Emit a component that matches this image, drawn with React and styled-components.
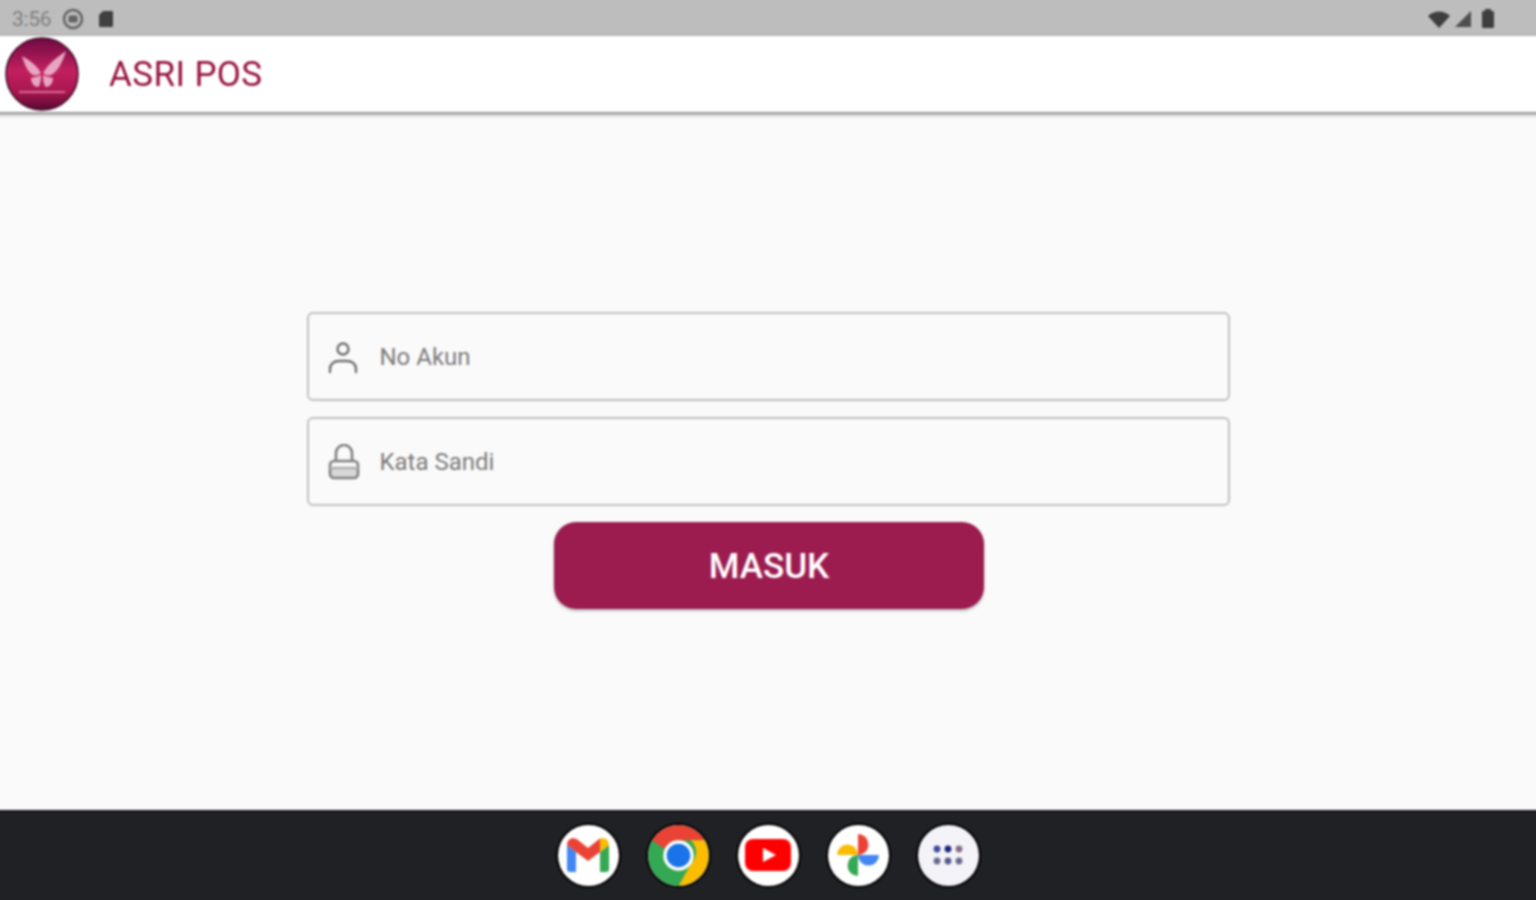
import React from "react";
import styled, { createGlobalStyle } from "styled-components";

const GlobalStyle = createGlobalStyle`
  html, body {
    margin: 0;
    padding: 0;
    background: #fafafa;
    overflow: hidden;
  }
  body {
    font-family: Roboto, "Liberation Sans", sans-serif;
  }
`;

// the reference is an upscaled capture, so everything is a little soft.
// 4px of bleed on each side keeps the blur from fading at the window edge
const Screen = styled.div`
  width: 1544px;
  height: 908px;
  margin: -4px;
  display: flex;
  flex-direction: column;
  overflow: hidden;
  filter: blur(0.9px);
`;

const StatusBar = styled.div`
  height: 40px;
  flex: none;
  background: #bdbdbd;
  display: flex;
  align-items: center;
  justify-content: space-between;
  padding: 5px 45px 0 16px;
  box-sizing: border-box;
`;

const StatusGroup = styled.div`
  display: flex;
  align-items: center;
  gap: ${(p) => p.$gap || 0}px;
`;

const Clock = styled.span`
  font-size: 21px;
  color: #808080;
  letter-spacing: -0.3px;
  margin-right: -2px;
`;

const AppBar = styled.header`
  height: 76px;
  flex: none;
  background: #fff;
  display: flex;
  align-items: center;
  padding-left: 9px;
  box-shadow: 0 2px 4px rgba(0, 0, 0, 0.55);
  position: relative;
  z-index: 1;
`;

const Title = styled.h1`
  margin: 0 0 0 30px;
  font-size: 35px;
  font-weight: 400;
  letter-spacing: 0.4px;
  color: #96123f;
`;

const Main = styled.main`
  flex: 1;
  background: #fafafa;
  display: flex;
  flex-direction: column;
  align-items: center;
  justify-content: center;
  gap: 16px;
  padding-bottom: 2px;
`;

const Field = styled.div`
  width: 923px;
  height: 89px;
  box-sizing: border-box;
  border: 2px solid #bfbfbf;
  border-radius: 6px;
  display: flex;
  align-items: center;
  padding: 2px 0 0 18px;
  gap: 19px;
`;

const Placeholder = styled.span`
  font-size: 24px;
  color: #7a7a7a;
`;

const LoginButton = styled.button`
  width: 430px;
  height: 87px;
  margin-left: 2px;
  padding: 3px 0 0;
  border: none;
  border-radius: 22px;
  background: #9c1c50;
  color: #fff;
  font-family: Roboto, "Liberation Sans", sans-serif;
  font-size: 35px;
  font-weight: 500;
  box-shadow: 0 2px 3px rgba(0, 0, 0, 0.25);
`;

const NavBar = styled.nav`
  height: 94px;
  flex: none;
  background: #202125;
  border-top: 2px solid #111;
  box-sizing: border-box;
  display: flex;
  align-items: center;
  justify-content: center;
  gap: 29px;
  padding-bottom: 6px;
`;

const DockIcon = styled.div`
  width: 61px;
  height: 61px;
  border-radius: 50%;
  background: ${(p) => p.$bg || "#fff"};
  box-shadow: 0 0 0 2px #000;
  display: flex;
  align-items: center;
  justify-content: center;
  overflow: hidden;
`;

const Logo = () => (
  <svg width="74" height="74" viewBox="0 0 74 74">
    <defs>
      <linearGradient id="logoFill" x1="0" y1="0" x2="0" y2="1">
        <stop offset="0" stopColor="#6e0a42" />
        <stop offset="0.45" stopColor="#c2205f" />
        <stop offset="0.75" stopColor="#a8174f" />
        <stop offset="1" stopColor="#560832" />
      </linearGradient>
    </defs>
    <circle cx="37" cy="37" r="36" fill="url(#logoFill)" stroke="#3f0826" strokeWidth="1.500" />
    <g fill="#eeb4cd" opacity="0.9">
      <path d="M36 36 C32 29 26 24 17 19 C20 29 23 35 28 38 C31 39 34 38 36 36Z" />
      <path d="M38 36 C42 29 48 23 61 14 C57 27 52 35 46 38 C43 39 40 38 38 36Z" />
      <path d="M36 38 C32 40 28 40 26 41 C26 46 29 50 33 50 C35 49 36 44 36 38Z" />
      <path d="M38 38 C42 40 46 40 48 41 C48 46 45 50 41 50 C39 49 38 44 38 38Z" />
    </g>
    <rect x="14" y="54" width="46" height="2" fill="#e889ae" opacity="0.75" />
  </svg>
);

const SyncIcon = () => (
  <svg width="22" height="22" viewBox="0 0 22 22">
    <circle cx="11" cy="11" r="9" fill="none" stroke="#626262" strokeWidth="2.500" />
    <rect x="6.500" y="7.500" width="9" height="7" rx="1.500" fill="#626262" />
  </svg>
);

const SimIcon = () => (
  <svg width="18" height="18" viewBox="0 0 18 18">
    <path d="M6 1h9a1 1 0 0 1 1 1v14a1 1 0 0 1-1 1H3a1 1 0 0 1-1-1V5z" fill="#404040" />
  </svg>
);

const WifiIcon = () => (
  <svg width="24" height="18" viewBox="0 0 24 18">
    <path d="M1 6 C7 0 17 0 23 6 L12 18Z" fill="#3e3e3e" />
  </svg>
);

const SignalIcon = () => (
  <svg width="18" height="18" viewBox="0 0 18 18">
    <path d="M17 1V17H1Z" fill="#4e4e4e" />
  </svg>
);

const BatteryIcon = () => (
  <svg width="20" height="20" viewBox="-6 0 20 20">
    <path d="M4 0h6v2h2a1 1 0 0 1 1 1v15a1 1 0 0 1-1 1H2a1 1 0 0 1-1-1V3a1 1 0 0 1 1-1h2z" fill="#3e3e3e" />
  </svg>
);

const UserIcon = () => (
  <svg width="34" height="34" viewBox="0 0 34 34" fill="none" stroke="#707070" strokeWidth="2.400">
    <circle cx="16" cy="9" r="5.500" />
    <path d="M3 32v-3c0-5 4-8 9-8h8c5 0 9 3 9 8v3" strokeLinecap="round" />
  </svg>
);

const LockIcon = () => (
  <svg width="34" height="36" viewBox="0 0 34 36" fill="none" stroke="#808080" strokeWidth="2.600">
    <path d="M9 17V9a8 8 0 0 1 16 0v8" />
    <path d="M3 24h28v6a4 4 0 0 1-4 4H7a4 4 0 0 1-4-4z" fill="#d8d8d8" stroke="none" />
    <rect x="3" y="17" width="28" height="17" rx="4" />
    <path d="M3 24h28" stroke="#b0b0b0" />
  </svg>
);

const GmailIcon = () => (
  <svg width="44" height="36" viewBox="0 0 44 36">
    <path d="M1 8v24a3 3 0 0 0 3 3h6V15z" fill="#4285f4" />
    <path d="M43 8v24a3 3 0 0 1-3 3h-6V15z" fill="#34a853" />
    <path d="M1 8c0-6 6-9 11-5l10 8 10-8c1-1 2-1.500 2-1.500V15L22 24 10 15 1 8z" fill="#ea4335" />
    <path d="M34 1.500c4-2 9 1 9 6.500l-9 7z" fill="#fbbc04" />
  </svg>
);

const ChromeIcon = () => (
  <svg width="61" height="61" viewBox="0 0 62 62">
    <circle cx="31" cy="31" r="31" fill="#34a853" />
    <path d="M31 0a31 31 0 0 1 26.800 15.500H31a15.500 15.500 0 0 0-14 9L4.200 15.500A31 31 0 0 1 31 0z" fill="#ea4335" />
    <path d="M57.800 15.500A31 31 0 0 1 31 62l13-23a15.500 15.500 0 0 0-1-23.500z" fill="#fbbc04" />
    <circle cx="31" cy="31" r="15.500" fill="#fff" />
    <circle cx="31" cy="31" r="12" fill="#1a73e8" />
  </svg>
);

const YoutubeIcon = () => (
  <svg width="46" height="32" viewBox="0 0 46 32">
    <rect width="46" height="32" rx="8" fill="#ff0000" />
    <path d="M18 9l13 7-13 7z" fill="#fff" />
  </svg>
);

const PhotosIcon = () => (
  <svg width="44" height="44" viewBox="0 0 44 44">
    <path d="M22 22H1a10.500 10.500 0 0 1 21 0z" fill="#fbbc04" />
    <path d="M22 22V1a10.500 10.500 0 0 1 0 21z" fill="#ea4335" />
    <path d="M22 22h21a10.500 10.500 0 0 1-21 0z" fill="#4285f4" />
    <path d="M22 22v21a10.500 10.500 0 0 1 0-21z" fill="#34a853" />
  </svg>
);

const AppsIcon = () => (
  <svg width="30" height="22" viewBox="0 0 30 22">
    <circle cx="4" cy="5" r="3.400" fill="#3c4a9c" />
    <circle cx="15" cy="5" r="3.400" fill="#1a237e" />
    <circle cx="26" cy="5" r="3.400" fill="#8a6a80" />
    <circle cx="4" cy="17" r="3.400" fill="#6a6a90" />
    <circle cx="15" cy="17" r="3.400" fill="#55598c" />
    <circle cx="26" cy="17" r="3.400" fill="#6a6a90" />
  </svg>
);

const App = () => {
  return (
    <Screen>
      <GlobalStyle />
      <StatusBar>
        <StatusGroup $gap={13}>
          <Clock>3:56</Clock>
          <SyncIcon />
          <SimIcon />
        </StatusGroup>
        <StatusGroup $gap={3}>
          <WifiIcon />
          <SignalIcon />
          <BatteryIcon />
        </StatusGroup>
      </StatusBar>
      <AppBar>
        <Logo />
        <Title>ASRI POS</Title>
      </AppBar>
      <Main>
        <Field>
          <UserIcon />
          <Placeholder>No Akun</Placeholder>
        </Field>
        <Field>
          <LockIcon />
          <Placeholder>Kata Sandi</Placeholder>
        </Field>
        <LoginButton>MASUK</LoginButton>
      </Main>
      <NavBar>
        <DockIcon><GmailIcon /></DockIcon>
        <DockIcon><ChromeIcon /></DockIcon>
        <DockIcon><YoutubeIcon /></DockIcon>
        <DockIcon><PhotosIcon /></DockIcon>
        <DockIcon $bg="#f4f3f8"><AppsIcon /></DockIcon>
      </NavBar>
    </Screen>
  );
};

export default App;
